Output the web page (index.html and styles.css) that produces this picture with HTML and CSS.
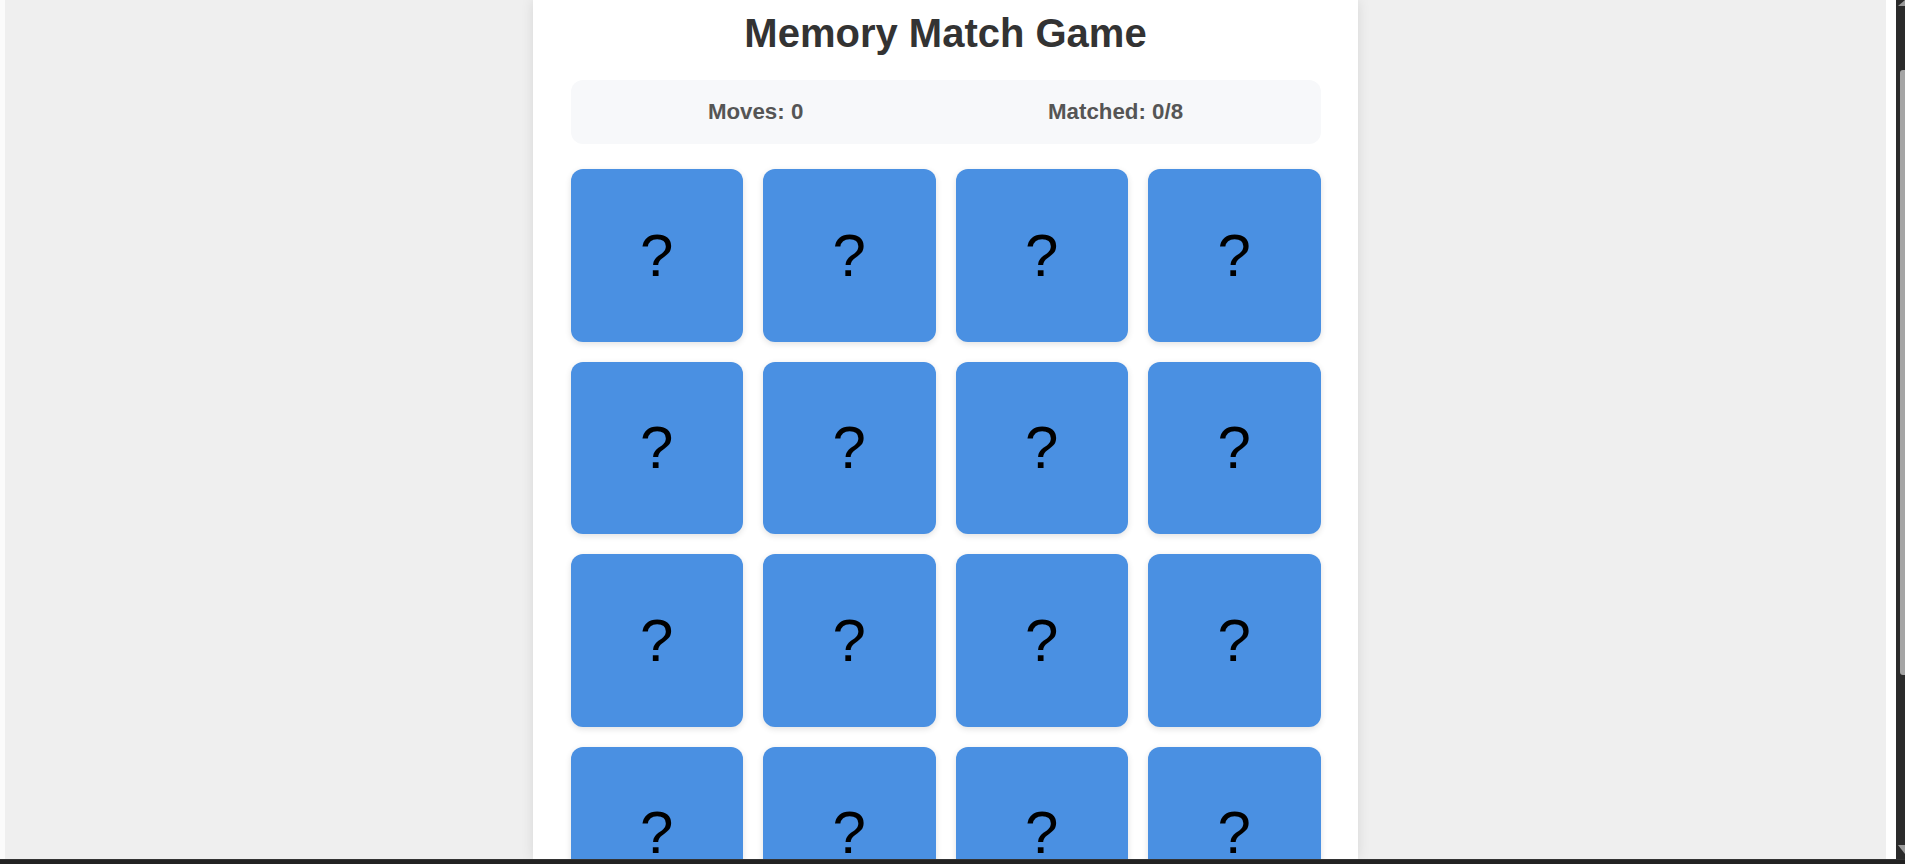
FILE: index.html
```html
<!DOCTYPE html>
<html lang="en">
<head>
<meta charset="utf-8">
<title>Memory Match Game</title>
<link rel="stylesheet" href="styles.css">
</head>
<body>
<div class="frame">
  <div class="edge-left"></div>
  <main class="page">
    <div class="container">
      <h1 class="title">Memory Match Game</h1>
      <div class="stats">
        <div class="stat">Moves: <span>0</span></div>
        <div class="stat">Matched: <span>0</span>/8</div>
      </div>
      <div class="board">
        <div class="card">?</div><div class="card">?</div><div class="card">?</div><div class="card">?</div>
        <div class="card">?</div><div class="card">?</div><div class="card">?</div><div class="card">?</div>
        <div class="card">?</div><div class="card">?</div><div class="card">?</div><div class="card">?</div>
        <div class="card">?</div><div class="card">?</div><div class="card">?</div><div class="card">?</div>
      </div>
    </div>
  </main>
  <div class="edge-right"></div>
  <div class="scrollbar">
    <div class="arrow-up"></div>
    <div class="thumb"></div>
    <div class="arrow-down"></div>
  </div>
</div>
<div class="bottom-bar"></div>
</body>
</html>
```
FILE: styles.css
```css
html, body {
  margin: 0;
  padding: 0;
  height: 864px;
  overflow: hidden;
  background: #222;
}
body {
  display: flex;
  flex-direction: column;
  font-family: "Liberation Sans", Arial, sans-serif;
}
.frame {
  display: flex;
  height: 859px;
  flex: none;
}
.edge-left {
  width: 5px;
  background: #fbfbfb;
  flex: none;
}
.page {
  flex: 1;
  background: #efefef;
  overflow: hidden;
  display: flex;
  justify-content: center;
}
.edge-right {
  width: 10px;
  background: #fff;
  flex: none;
}
.scrollbar {
  width: 9px;
  background: #2b2b2b;
  flex: none;
  display: flex;
  flex-direction: column;
  align-items: flex-end;
}
.arrow-up {
  width: 0;
  height: 0;
  border-left: 7px solid transparent;
  border-bottom: 6px solid #9a9a9a;
}
.thumb {
  margin-top: 64px;
  width: 5px;
  height: 605px;
  background: #a5a5a5;
  border-radius: 3px 0 0 3px;
}
.arrow-down {
  margin-top: auto;
  margin-bottom: 5px;
  width: 0;
  height: 0;
  border-left: 7px solid transparent;
  border-top: 9px solid #9a9a9a;
}
.bottom-bar {
  flex: 1;
  background: #222;
  border-top: 1px solid #333;
}
.container {
  width: 750px;
  padding: 0 37.5px;
  background: #fff;
  box-shadow: 0 0 12px rgba(0, 0, 0, 0.1);
  flex: none;
}
.title {
  margin: 0 0 24px;
  padding-top: 10px;
  font-size: 40px;
  line-height: 46px;
  font-weight: bold;
  color: #333;
  text-align: center;
}
.stats {
  height: 64px;
  padding: 0 15px;
  background: #f7f8fa;
  border-radius: 12px;
  display: flex;
  justify-content: space-around;
  align-items: center;
  margin-bottom: 25px;
}
.stat {
  font-size: 22.3px;
  font-weight: bold;
  color: #555;
}
.board {
  display: grid;
  grid-template-columns: repeat(4, 1fr);
  gap: 20px;
}
.card {
  aspect-ratio: 1 / 1;
  background: #4a90e2;
  border-radius: 12px;
  box-shadow: 0 2px 6px rgba(0, 0, 0, 0.12);
  display: flex;
  align-items: center;
  justify-content: center;
  font-size: 60px;
  color: #000;
}
```
